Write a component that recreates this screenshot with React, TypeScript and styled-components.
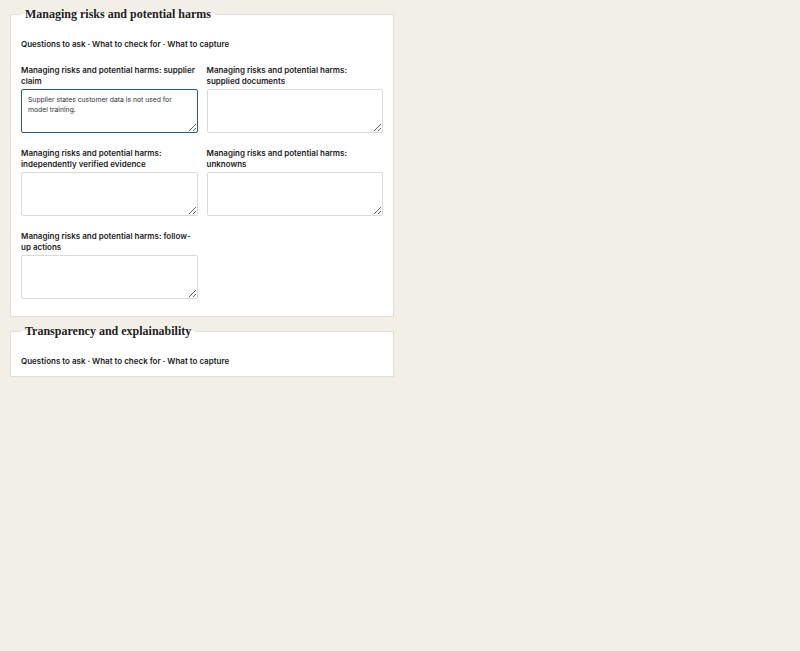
import styled, { createGlobalStyle } from 'styled-components';

const GlobalStyle = createGlobalStyle`
  html, body {
    margin: 0;
    padding: 0;
    background: #f2efe9;
  }
  body {
    font-family: Inter, "Liberation Sans", sans-serif;
    color: #1c1c1c;
  }
`;

const Page = styled.div`
  width: 384px;
  padding: 6px 10px;
  display: flex;
  flex-direction: column;
  gap: 6px;
`;

const Section = styled.fieldset`
  margin: 0;
  padding: 0 10px 10px;
  border: 1px solid #e2ded7;
  background: #ffffff;
  min-width: 0;
`;

const Legend = styled.legend`
  padding: 0 4px;
  margin-left: 0;
  font-family: Georgia, "Liberation Serif", serif;
  font-weight: 700;
  font-size: 12px;
  line-height: 16px;
  color: #222;
`;

const Hint = styled.p`
  margin: 17px 0 0;
  font-size: 8px;
  line-height: 10px;
  font-weight: 600;
`;

const FieldGrid = styled.div`
  margin: 16px 0 7px;
  display: grid;
  grid-template-columns: 1fr 1fr;
  column-gap: 9px;
  row-gap: 15px;
`;

const Field = styled.label`
  display: flex;
  flex-direction: column;
  gap: 3px;
`;

const FieldLabel = styled.span`
  padding-right: 2px;
  font-size: 8px;
  line-height: 10.5px;
  font-weight: 600;
  min-height: 21px;
`;

const TextBox = styled.textarea<{ $active?: boolean }>`
  box-sizing: border-box;
  height: 44px;
  width: 100%;
  margin: 0;
  padding: 5px 6px;
  font-family: Inter, "Liberation Sans", sans-serif;
  font-size: 6.8px;
  line-height: 10px;
  color: #333;
  border: ${(p) => (p.$active ? '1.5px solid #2b56a8' : '1px solid #dcdad6')};
  border-radius: 2px;
  background: #fff;
  outline: none;
`;

type FieldDef = { label: string; value?: string };

const riskFields: FieldDef[] = [
  {
    label: 'Managing risks and potential harms: supplier claim',
    value: 'Supplier states customer data is not used for model training.',
  },
  { label: 'Managing risks and potential harms: supplied documents' },
  { label: 'Managing risks and potential harms: independently verified evidence' },
  { label: 'Managing risks and potential harms: unknowns' },
  { label: 'Managing risks and potential harms: follow-up actions' },
];

const hintText = 'Questions to ask · What to check for · What to capture';

export default function App() {
  return (
    <>
      <GlobalStyle />
      <Page>
        <Section>
          <Legend>Managing risks and potential harms</Legend>
          <Hint>{hintText}</Hint>
          <FieldGrid>
            {riskFields.map((f, i) => (
              <Field key={f.label}>
                <FieldLabel>{f.label}</FieldLabel>
                <TextBox $active={i === 0} defaultValue={f.value ?? ''} />
              </Field>
            ))}
          </FieldGrid>
        </Section>
        <Section>
          <Legend>Transparency and explainability</Legend>
          <Hint>{hintText}</Hint>
        </Section>
      </Page>
    </>
  );
}
